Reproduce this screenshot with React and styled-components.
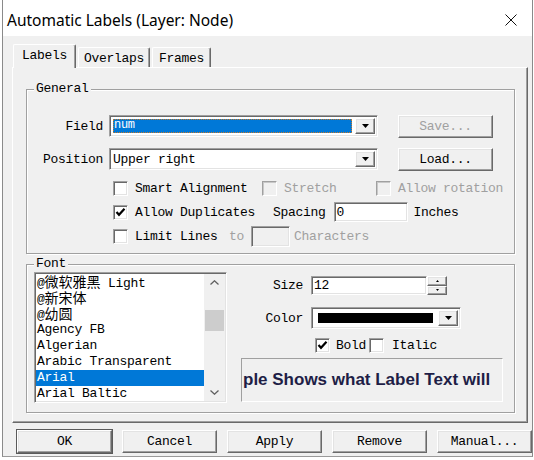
import React from 'react'
import styled, { createGlobalStyle } from 'styled-components'

const mono = `"Liberation Mono", "Noto Sans CJK SC", monospace`

const GlobalStyle = createGlobalStyle`
  html, body {
    margin: 0;
    padding: 0;
    background: #fff;
  }
  body {
    width: 534px;
    height: 460px;
    overflow: hidden;
  }
  * { box-sizing: border-box; }
`

const Window = styled.div`
  margin-left: 2px;
  width: 531px;
  height: 457px;
  border-left: 1px solid #8a8a8a;
  border-right: 1px solid #8a8a8a;
  border-bottom: 1px solid #9a9a9a;
  background: #f0f0f0;
  display: flex;
  flex-direction: column;
  font-family: ${mono};
  font-size: 13px;
  letter-spacing: -0.3px;
  color: #000;
`

const TitleBar = styled.div`
  height: 36px;
  background: #fff;
  display: flex;
  align-items: center;
  justify-content: space-between;
  padding: 4px 15px 0 4px;
`

const Title = styled.span`
  font-family: "Noto Sans", sans-serif;
  font-size: 15.5px;
  letter-spacing: 0;
`

const TabRow = styled.div`
  margin-top: 8px;
  padding-left: 10px;
  height: 23px;
  display: flex;
  align-items: flex-end;
  gap: 2px;
  position: relative;
  z-index: 1;
`

const Tab = styled.div`
  width: ${p => p.$w}px;
  height: ${p => (p.$active ? 24 : 20)}px;
  margin-bottom: ${p => (p.$active ? -1 : 0)}px;
  background: #f0f0f0;
  border-top: 1px solid #fff;
  border-left: 1px solid #fff;
  border-right: 1px solid #696969;
  box-shadow: inset -1px 0 #a0a0a0;
  border-radius: 2px 2px 0 0;
  display: flex;
  justify-content: center;
  padding-top: 3px;
  line-height: 15px;
`

const Panel = styled.div`
  margin-left: 9px;
  width: 516px;
  height: 356px;
  border: 1px solid;
  border-color: #fff #696969 #696969 #fff;
  box-shadow: inset -1px -1px #a0a0a0;
  padding: 21px 0 0 13px;
`

const Group = styled.div`
  position: relative;
  width: 489px;
  height: ${p => p.$h}px;
  margin-top: ${p => p.$mt || 0}px;
  border: 1px solid #a0a0a0;
  box-shadow: inset 1px 1px #fff, 1px 1px #fff;
  padding: ${p => p.$pad};
`

const GroupTitle = styled.span`
  position: absolute;
  top: -9px;
  left: 7px;
  padding: 0 2px;
  background: #f0f0f0;
  line-height: 16px;
`

const Row = styled.div`
  display: flex;
  align-items: center;
  height: ${p => p.$h}px;
  margin-top: ${p => p.$mt || 0}px;
  padding-left: ${p => p.$pl || 0}px;
`

const FieldLabel = styled.span`
  width: ${p => p.$w}px;
  text-align: right;
  margin-right: ${p => p.$mr}px;
  white-space: nowrap;
`

const Sunken = styled.div`
  border: 1px solid;
  border-color: #a0a0a0 #fff #fff #a0a0a0;
  box-shadow: inset 1px 1px #696969, inset -1px -1px #e3e3e3;
  background: ${p => (p.$disabled ? '#f0f0f0' : '#fff')};
`

const Combo = styled(Sunken)`
  width: ${p => p.$w}px;
  height: 22px;
  display: flex;
  align-items: stretch;
  padding: 2px;
`

const ComboValue = styled.div`
  flex: 1;
  display: flex;
  align-items: center;
  padding-left: ${p => p.$pl || 1}px;
  margin-right: 2px;
  white-space: nowrap;
  overflow: hidden;
`

const SelectedValue = styled(ComboValue)`
  margin: 1px 3px 1px 1px;
  background: #0078d7;
  color: #fff;
  outline: 1px dotted #c87a2a;
  outline-offset: -1px;
  font-size: 12px;
  align-items: flex-start;
  line-height: 12px;
`

const Swatch = styled.div`
  width: 115px;
  height: 10px;
  background: #000;
`

const Raised = styled.div`
  border: 1px solid;
  border-color: #fff #696969 #696969 #fff;
  box-shadow: inset -1px -1px #a0a0a0, inset 1px 1px #e3e3e3;
  background: #f0f0f0;
  display: flex;
  align-items: center;
  justify-content: center;
`

const DropButton = styled(Raised)`
  width: 20px;
`

const Button = styled(Raised)`
  width: 95px;
  height: 23px;
  margin-left: ${p => p.$ml || 0}px;
  color: ${p => (p.$disabled ? '#a0a0a0' : '#000')};
  outline: ${p => (p.$default ? '1px solid #5a5a5a' : 'none')};
`

const CheckItem = styled.div`
  display: flex;
  align-items: center;
  width: ${p => (p.$w ? `${p.$w}px` : 'auto')};
  gap: ${p => p.$gap || 7}px;
  color: ${p => (p.$disabled ? '#a0a0a0' : '#000')};
  white-space: nowrap;
`

const Box = styled(Sunken)`
  width: 15px;
  height: 15px;
  display: flex;
  align-items: center;
  justify-content: center;
  box-shadow: ${p => (p.$disabled ? 'inset 1px 1px #c8c8c8' : 'inset 1px 1px #696969, inset -1px -1px #e3e3e3')};
`

const Muted = styled.span`
  color: #a0a0a0;
  margin-right: ${p => p.$mr || 0}px;
  margin-left: ${p => p.$ml || 0}px;
`

const Plain = styled.span`
  margin-right: ${p => p.$mr || 0}px;
  margin-left: ${p => p.$ml || 0}px;
  white-space: nowrap;
`

const TextBox = styled(Sunken)`
  width: ${p => p.$w}px;
  height: ${p => p.$h}px;
  padding-left: 2px;
  display: flex;
  align-items: center;
`

const FontBody = styled.div`
  display: flex;
  gap: 14px;
`

const ListBox = styled(Sunken)`
  width: 193px;
  height: 131px;
  padding: 1px;
  display: flex;
`

const Items = styled.div`
  flex: 1;
  overflow: hidden;
`

const Item = styled.div`
  height: 16px;
  line-height: 16px;
  padding-left: 1px;
  white-space: nowrap;
  background: ${p => (p.$selected ? '#0078d7' : 'transparent')};
  color: ${p => (p.$selected ? '#fff' : '#000')};
`

const Cjk = styled.span`
  font-family: "Noto Sans CJK SC", sans-serif;
  font-size: 14px;
  line-height: 14px;
  letter-spacing: 0;
`

const ScrollBar = styled.div`
  width: 21px;
  background: #f0f0f0;
  display: flex;
  flex-direction: column;
  align-items: center;
`

const ScrollArrow = styled.div`
  height: 17px;
  width: 100%;
  display: flex;
  align-items: center;
  justify-content: center;
`

const Thumb = styled.div`
  width: 19px;
  height: 21px;
  margin-top: 19px;
  background: #cdcdcd;
`

const Track = styled.div`
  flex: 1;
`

const RightCol = styled.div`
  width: 262px;
  display: flex;
  flex-direction: column;
`

const Spinner = styled.div`
  width: 20px;
  height: 19px;
  display: flex;
  flex-direction: column;
`

const SpinHalf = styled(Raised)`
  flex: 1;
`

const Sample = styled.div`
  margin-top: 4px;
  height: 44px;
  border: 1px solid;
  border-color: #a0a0a0 #fff #fff #a0a0a0;
  display: flex;
  align-items: center;
  padding-left: 1px;
  font-family: "Liberation Sans", Arial, sans-serif;
  font-weight: bold;
  font-size: 17px;
  letter-spacing: 0;
  color: #1e1e46;
  white-space: nowrap;
  overflow: hidden;
`

const ButtonRow = styled.div`
  display: flex;
  margin-top: 7px;
  padding-left: 14px;
  gap: 10px;
`

const DownArrow = () => (
  <svg width="7" height="4" viewBox="0 0 7 4">
    <polygon points="0,0 7,0 3.5,4" fill="#000" />
  </svg>
)

const Chevron = ({ up }) => (
  <svg width="9" height="5" viewBox="0 0 9 5">
    <path d={up ? 'M0.5 4.5 L4.5 0.8 L8.5 4.5' : 'M0.5 0.5 L4.5 4.2 L8.5 0.5'} stroke="#606060" strokeWidth="1.3" fill="none" />
  </svg>
)

const SpinDot = ({ up }) => (
  <svg width="3" height="2" viewBox="0 0 3 2">
    <polygon points={up ? '1.5,0 3,2 0,2' : '0,0 3,0 1.5,2'} fill="#000" />
  </svg>
)

const Tick = () => (
  <svg width="11" height="11" viewBox="0 0 11 11">
    <path d="M1.5 5 L4 7.8 L9.5 1.8" stroke="#000" strokeWidth="2.2" fill="none" />
  </svg>
)

const CloseIcon = () => (
  <svg width="12" height="12" viewBox="0 0 12 12">
    <path d="M0.5 0.5 L11.5 11.5 M11.5 0.5 L0.5 11.5" stroke="#111" strokeWidth="1" />
  </svg>
)

const Check = ({ checked, disabled, label, w, gap }) => (
  <CheckItem $w={w} $disabled={disabled} $gap={gap}>
    <Box $disabled={disabled}>{checked && <Tick />}</Box>
    {label && <span>{label}</span>}
  </CheckItem>
)

const fonts = [
  { cjk: '微软雅黑', rest: ' Light' },
  { cjk: '新宋体' },
  { cjk: '幼圆' },
  { text: 'Agency FB' },
  { text: 'Algerian' },
  { text: 'Arabic Transparent' },
  { text: 'Arial', selected: true },
  { text: 'Arial Baltic' },
]

export default function App() {
  return (
    <>
      <GlobalStyle />
      <Window>
        <TitleBar>
          <Title>Automatic Labels (Layer: Node)</Title>
          <CloseIcon />
        </TitleBar>

        <TabRow>
          <Tab $active $w={63}>Labels</Tab>
          <Tab $w={72}>Overlaps</Tab>
          <Tab $w={59}>Frames</Tab>
        </TabRow>

        <Panel>
          <Group $h={165} $pad="25px 0 0 0">
            <GroupTitle>General</GroupTitle>
            <Row $h={22}>
              <FieldLabel $w={76} $mr={6}>Field</FieldLabel>
              <Combo $w={269}>
                <SelectedValue>num</SelectedValue>
                <DropButton><DownArrow /></DropButton>
              </Combo>
              <Button $ml={20} $disabled>Save...</Button>
            </Row>
            <Row $h={22} $mt={11}>
              <FieldLabel $w={76} $mr={6}>Position</FieldLabel>
              <Combo $w={269}>
                <ComboValue>Upper right</ComboValue>
                <DropButton><DownArrow /></DropButton>
              </Combo>
              <Button $ml={20}>Load...</Button>
            </Row>
            <Row $h={24} $mt={6} $pl={86}>
              <Check w={149} label="Smart Alignment" />
              <Check w={114} disabled label="Stretch" />
              <Check disabled label="Allow rotation" />
            </Row>
            <Row $h={24} $pl={86}>
              <Check w={160} checked label="Allow Duplicates" />
              <Plain $mr={8}>Spacing</Plain>
              <TextBox $w={74} $h={20}>0</TextBox>
              <Plain $ml={6}>Inches</Plain>
            </Row>
            <Row $h={24} $pl={86}>
              <Check w={116} label="Limit Lines" />
              <Muted $mr={7}>to</Muted>
              <TextBox $w={39} $h={21} $disabled />
              <Muted $ml={4}>Characters</Muted>
            </Row>
          </Group>

          <Group $h={149} $mt={10} $pad="7px 0 0 7px">
            <GroupTitle>Font</GroupTitle>
            <FontBody>
              <ListBox>
                <Items>
                  {fonts.map((f, i) => (
                    <Item key={i} $selected={f.selected}>
                      {f.cjk ? (
                        <>@<Cjk>{f.cjk}</Cjk>{f.rest}</>
                      ) : (
                        f.text
                      )}
                    </Item>
                  ))}
                </Items>
                <ScrollBar>
                  <ScrollArrow><Chevron up /></ScrollArrow>
                  <Thumb />
                  <Track />
                  <ScrollArrow><Chevron /></ScrollArrow>
                </ScrollBar>
              </ListBox>

              <RightCol>
                <Row $h={19} $mt={4}>
                  <FieldLabel $w={62} $mr={8}>Size</FieldLabel>
                  <TextBox $w={116} $h={19}>12</TextBox>
                  <Spinner>
                    <SpinHalf><SpinDot up /></SpinHalf>
                    <SpinHalf><SpinDot /></SpinHalf>
                  </Spinner>
                </Row>
                <Row $h={22} $mt={12}>
                  <FieldLabel $w={62} $mr={8}>Color</FieldLabel>
                  <Combo $w={150}>
                    <ComboValue $pl={4}><Swatch /></ComboValue>
                    <DropButton><DownArrow /></DropButton>
                  </Combo>
                </Row>
                <Row $h={17} $mt={8} $pl={74}>
                  <Check w={54} checked gap={6} label="Bold" />
                  <Check gap={8} label="Italic" />
                </Row>
                <Sample>ple Shows what Label Text will</Sample>
              </RightCol>
            </FontBody>
          </Group>
        </Panel>

        <ButtonRow>
          <Button $default>OK</Button>
          <Button>Cancel</Button>
          <Button>Apply</Button>
          <Button>Remove</Button>
          <Button>Manual...</Button>
        </ButtonRow>
      </Window>
    </>
  )
}
